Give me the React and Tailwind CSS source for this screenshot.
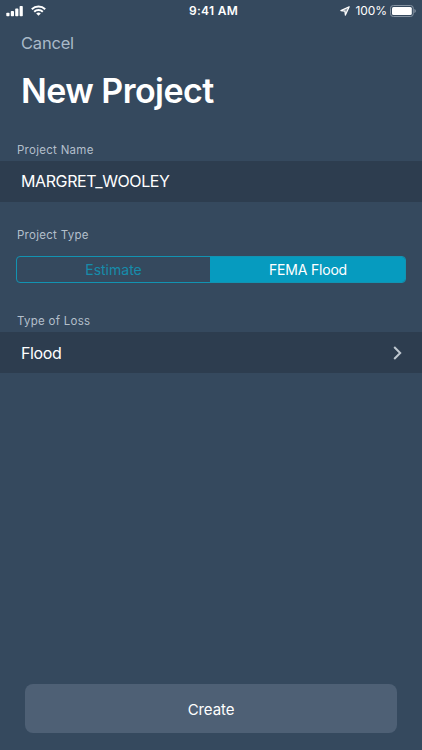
function StatusBar() {
  return (
    <div className="h-[22px] grid grid-cols-3 items-center pl-[6px] pr-[6px] text-white shrink-0">
      <div className="flex items-center gap-[8px]">
        <svg className="w-[17px] h-[11px]" viewBox="0 0 17 11" fill="currentColor">
          <rect x="0.3" y="6.8" width="3.2" height="3.4" rx="0.8" />
          <rect x="4.8" y="5" width="3.2" height="5.2" rx="0.8" />
          <rect x="9.2" y="2.6" width="3.2" height="7.6" rx="0.8" />
          <rect x="13.6" y="0" width="3.2" height="10.2" rx="0.8" />
        </svg>
        <svg className="w-[15px] h-[11px] -mt-[2px]" viewBox="0 0 15 11" fill="none" stroke="currentColor" strokeWidth="2">
          <path d="M0.8 4.2a9.6 9.6 0 0 1 13.4 0" />
          <path d="M3.2 6.7a6.2 6.2 0 0 1 8.6 0" />
          <path d="M7.5 10.8L5.2 8.5a3.3 3.3 0 0 1 4.6 0z" fill="currentColor" stroke="none" />
        </svg>
      </div>
      <p className="text-center text-[12px] font-semibold tracking-[0.3px] whitespace-nowrap pl-[5px]">9:41 AM</p>
      <div className="flex items-center justify-end">
        <svg className="w-[10px] h-[10px] mr-[6px]" viewBox="0 0 10 10" fill="currentColor" stroke="currentColor" strokeWidth="1.2" strokeLinejoin="round">
          <path d="M9.2 0.8L0.9 4.6l4 0.5 0.5 4z" fillOpacity="0.45" />
        </svg>
        <span className="text-[12px] tracking-[-0.1px] mr-[3px]">100%</span>
        <svg className="w-[26px] h-[12px] -mt-[1px]" viewBox="0 0 26 12" fill="none">
          <rect x="0.5" y="0.5" width="22.8" height="11" rx="2.8" stroke="#8593a2" />
          <rect x="2" y="2" width="19.8" height="8" rx="1.5" fill="#fff" />
          <path d="M24.4 4v4c0.8-0.3 1.4-1.1 1.4-2s-0.6-1.7-1.4-2z" fill="#8593a2" />
        </svg>
      </div>
    </div>
  );
}

function Label({ children }) {
  return <p className="pl-[17px] text-[11.5px] leading-[16px] tracking-[0.28px] text-[#b3bfcb]">{children}</p>;
}

export default function App() {
  return (
    <div
      className="h-screen flex flex-col bg-[#35495e] overflow-hidden"
      style={{ fontFamily: "Inter, 'Liberation Sans', sans-serif" }}
    >
      <StatusBar />

      {/* Header */}
      <div className="pl-[21px] pt-[10px]">
        <button className="block text-[16.5px] leading-[22px] tracking-[-0.2px] text-[#a9b9c9]">Cancel</button>
        <h1 className="mt-[16px] text-[34px] leading-[42px] font-semibold tracking-[-0.55px] text-white">New Project</h1>
      </div>

      <div className="pt-[30px]">
        <Label>Project Name</Label>
        <div className="mt-[3px] h-[41px] flex items-center pl-[21px] pb-[1px] bg-[#2d3d4f] text-[16px] tracking-[-0.4px] text-white">
          MARGRET_WOOLEY
        </div>
      </div>

      <div className="pt-[25px]">
        <Label>Project Type</Label>
        <div className="mt-[13px] mx-[16px] h-[27px] flex rounded-[4px] border border-[#1293b2] overflow-hidden text-[14px]">
          <button className="w-[193px] pb-[1px] text-[#168cab]">Estimate</button>
          <button className="flex-1 pb-[1px] pl-[1px] bg-[#069bbf] tracking-[-0.2px] text-white">FEMA Flood</button>
        </div>
      </div>

      <div className="pt-[30px]">
        <Label>Type of Loss</Label>
        <button className="mt-[3px] w-full h-[41px] flex items-center justify-between pl-[21px] pr-[20px] bg-[#2d3d4f] text-[16px] tracking-[-0.35px] text-white">
          Flood
          <svg className="w-[9px] h-[14px]" viewBox="0 0 9 14" fill="none" stroke="#bfc8d0" strokeWidth="2">
            <path d="M1.2 1l6 6-6 6" />
          </svg>
        </button>
      </div>

      <div className="mt-auto px-[25px] pb-[17px]">
        <button className="w-full h-[49px] pt-[3px] rounded-[8px] bg-[#4e6075] text-[15px] tracking-[-0.1px] text-white">Create</button>
      </div>
    </div>
  );
}
